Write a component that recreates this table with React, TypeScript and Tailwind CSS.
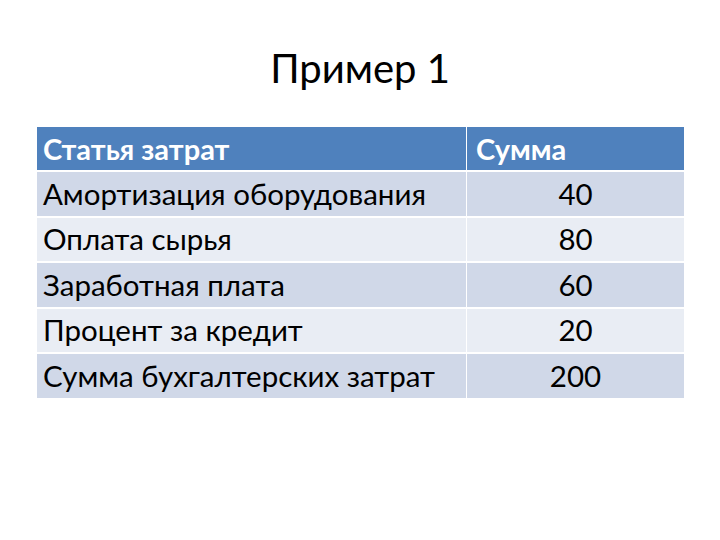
import React from "react";

const rows: [string, string][] = [
  ["Амортизация оборудования", "40"],
  ["Оплата сырья", "80"],
  ["Заработная плата", "60"],
  ["Процент за кредит", "20"],
  ["Сумма бухгалтерских затрат", "200"],
];

export default function App() {
  return (
    <div className="w-[720px] h-[540px] bg-white overflow-hidden" style={{ fontFamily: "Lato, 'Open Sans', sans-serif" }}>
      <div className="h-[127px] flex justify-center pt-[44px]">
        <h1 className="text-[40px] leading-[48px] text-black font-normal">Пример 1</h1>
      </div>
      <div className="ml-[37px] w-[647px] flex flex-col gap-[2px]">
        <div className="flex h-[43px] bg-[#4f81bd]">
          <div className="w-[429px] flex items-center pl-[6px] text-white font-bold text-[29px]">Статья затрат</div>
          <div className="w-[1px] bg-white"></div>
          <div className="flex-1 flex items-center pl-[9px] text-white font-bold text-[29px]">Сумма</div>
        </div>
        {rows.map(([name, v], i) => (
          <div key={i} className={`flex h-[43.5px] ${i % 2 === 0 ? "bg-[#d0d8e8]" : "bg-[#e9edf4]"}`}>
            <div className="w-[429px] flex items-center pl-[6px] text-black text-[29.5px] whitespace-nowrap">{name}</div>
            <div className="w-[1px] bg-white"></div>
            <div className="flex-1 flex items-center justify-center text-black text-[29.5px]">{v}</div>
          </div>
        ))}
      </div>
    </div>
  );
}
